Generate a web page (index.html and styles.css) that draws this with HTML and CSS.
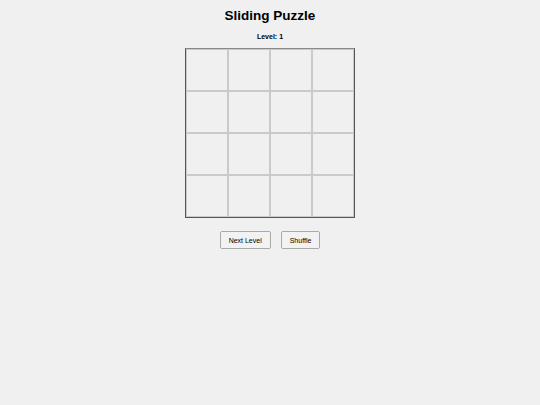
FILE: index.html
```html
<!DOCTYPE html>
<html>
<head>
<meta charset="utf-8">
<link rel="stylesheet" href="styles.css">
</head>
<body>
<div class="page">
  <h1 class="title">Sliding Puzzle</h1>
  <div class="level">Level: 1</div>
  <div class="board">
    <div class="tile"></div><div class="tile"></div><div class="tile"></div><div class="tile"></div>
    <div class="tile"></div><div class="tile"></div><div class="tile"></div><div class="tile"></div>
    <div class="tile"></div><div class="tile"></div><div class="tile"></div><div class="tile"></div>
    <div class="tile"></div><div class="tile"></div><div class="tile"></div><div class="tile"></div>
  </div>
  <div class="controls">
    <button class="btn">Next Level</button>
    <button class="btn">Shuffle</button>
  </div>
</div>
</body>
</html>
```
FILE: styles.css
```css
html, body {
  margin: 0;
  padding: 0;
  background: #f0f0f0;
  font-family: "Liberation Sans", Arial, sans-serif;
  color: #000;
}
.page {
  display: flex;
  flex-direction: column;
  align-items: center;
  padding-top: 7px;
}
.title {
  margin: 0;
  font-size: 13.5px;
  font-weight: bold;
  line-height: 18px;
}
.level {
  margin-top: 8px;
  font-size: 7px;
  font-weight: bold;
  line-height: 8px;
}
.board {
  margin-top: 7px;
  display: grid;
  grid-template-columns: repeat(4, 42px);
  grid-template-rows: repeat(4, 42px);
  border: 1px solid #555;
  border-top-color: #888;
}
.tile {
  box-sizing: border-box;
  border: 1px solid #cacaca;
  background: #f0f0f0;
}
.controls {
  margin-top: 13px;
  display: flex;
  gap: 10px;
}
.btn {
  font-family: "Liberation Sans", Arial, sans-serif;
  font-size: 7px;
  height: 18px;
  padding: 0 8px;
  background: #f2f2f2;
  border: 1px solid #aaa;
  border-radius: 2px;
  color: #000;
}
```
